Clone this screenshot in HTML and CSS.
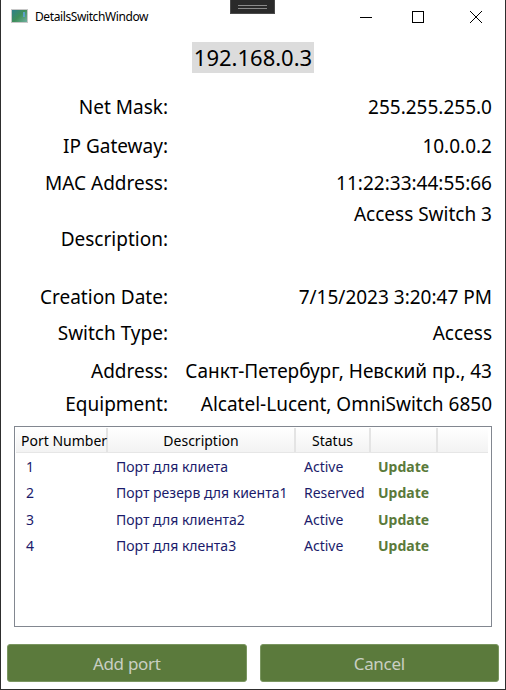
FILE: index.html
```html
<!DOCTYPE html>
<html>
<head>
<meta charset="utf-8">
<link rel="stylesheet" href="styles.css">
</head>
<body>
<div class="window">
  <div class="titlebar">
    <div class="app-icon"><span class="icon-bar"></span></div>
    <div class="title">DetailsSwitchWindow</div>
    <div class="grip"><span></span><span></span></div>
    <div class="controls">
      <div class="ctl"><svg width="14" height="14" viewBox="0 0 14 14"><line x1="1" y1="7.5" x2="13" y2="7.5" stroke="#000" stroke-width="1"/></svg></div>
      <div class="ctl"><svg width="14" height="14" viewBox="0 0 14 14"><rect x="1.5" y="1.5" width="11" height="11" fill="none" stroke="#000" stroke-width="1"/></svg></div>
      <div class="ctl"><svg width="14" height="14" viewBox="0 0 14 14"><path d="M1 1 L13 13 M13 1 L1 13" stroke="#000" stroke-width="1"/></svg></div>
    </div>
  </div>
  <div class="content">
    <div class="ip-wrap"><span class="ip">192.168.0.3</span></div>
    <div class="fields">
      <div class="row r1"><div class="label">Net Mask:</div><div class="value">255.255.255.0</div></div>
      <div class="row r2"><div class="label">IP Gateway:</div><div class="value">10.0.0.2</div></div>
      <div class="row r3"><div class="label">MAC Address:</div><div class="value">11:22:33:44:55:66</div></div>
      <div class="row r4 desc"><div class="label">Description:</div><div class="value">Access Switch 3</div></div>
      <div class="row r5"><div class="label">Creation Date:</div><div class="value">7/15/2023 3:20:47 PM</div></div>
      <div class="row r6"><div class="label">Switch Type:</div><div class="value">Access</div></div>
      <div class="row r7"><div class="label">Address:</div><div class="value">Санкт-Петербург, Невский пр., 43</div></div>
      <div class="row r8"><div class="label">Equipment:</div><div class="value">Alcatel-Lucent, OmniSwitch 6850</div></div>
    </div>
    <div class="list">
      <div class="lhead">
        <div class="hc c1 left">Port Number</div>
        <div class="hc c2">Description</div>
        <div class="hc c3">Status</div>
        <div class="hc c4"></div>
        <div class="hc c5"></div>
      </div>
      <div class="lrow"><div class="c1 num">1</div><div class="c2 d">Порт для клиета</div><div class="c3 s">Active</div><div class="c4 upd">Update</div></div>
      <div class="lrow"><div class="c1 num">2</div><div class="c2 d">Порт резерв для киента1</div><div class="c3 s">Reserved</div><div class="c4 upd">Update</div></div>
      <div class="lrow"><div class="c1 num">3</div><div class="c2 d">Порт для клиента2</div><div class="c3 s">Active</div><div class="c4 upd">Update</div></div>
      <div class="lrow"><div class="c1 num">4</div><div class="c2 d">Порт для клента3</div><div class="c3 s">Active</div><div class="c4 upd">Update</div></div>
    </div>
    <div class="buttons">
      <button class="btn">Add port</button>
      <button class="btn">Cancel</button>
    </div>
  </div>
</div>
</body>
</html>
```
FILE: styles.css
```css
* { box-sizing: border-box; }
html, body { margin: 0; padding: 0; }
body {
  width: 506px; height: 690px; overflow: hidden;
  font-family: "Noto Sans", "Open Sans", sans-serif;
  background: #fff;
}
.window {
  width: 506px; height: 690px;
  border-left: 1px solid #2e2e2e;
  border-right: 1px solid #2e2e2e;
  border-bottom: 1px solid #2e2e2e;
  display: flex; flex-direction: column;
  background: #fff;
}
.titlebar {
  height: 31px; display: flex; align-items: center; position: relative;
  padding-left: 10px;
}
.app-icon {
  width: 17px; height: 14px; margin-top: 1px;
  background: linear-gradient(135deg, #2f7f8a 0%, #3f8f5a 50%, #6fb0a0 100%);
  border: 1px solid #c8c8c8; position: relative;
}
.icon-bar { position: absolute; right: 2px; top: 2px; width: 2px; height: 5px; background: #5aa0c8; }
.title {
  margin-left: 7px; font-size: 12px; color: #000; margin-top: 1px;
  font-family: "Noto Sans", sans-serif; letter-spacing: -0.4px;
}
.grip {
  position: absolute; left: 229px; top: 0; width: 45px; height: 14px;
  background: #2a2a2a; border: 1px solid #4a4a4a; border-top: none;
  display: flex; flex-direction: column; align-items: center; justify-content: center; gap: 2px;
}
.grip span { width: 29px; height: 1px; background: #8a8a8a; }
.controls { margin-left: auto; display: flex; height: 31px; }
.ctl { width: 58px; display: flex; align-items: center; justify-content: center; padding-top: 2px; }
.ctl:first-child { width: 46px; }
.content { flex: 1; display: flex; flex-direction: column; }
.ip-wrap { display: flex; justify-content: center; padding-top: 11px; height: 57px; }
.ip {
  background: #dcdcdc; font-size: 22px; line-height: 31px; height: 31px;
  padding: 0 2px; color: #000;
}
.fields { display: flex; flex-direction: column; }
.row {
  display: grid; grid-template-columns: 167px 1fr; column-gap: 17px;
  align-items: center; font-size: 19px; color: #000; padding-right: 13px;
  line-height: 24px;
}
.label { text-align: right; white-space: nowrap; }
.value { text-align: right; white-space: nowrap; }
.r1 { height: 38px; }
.r2 { height: 40px; }
.r3 { height: 34px; }
.r4 { height: 78px; }
.desc .value { align-self: start; padding-top: 2px; }
.r5 { height: 38px; }
.r6 { height: 34px; }
.r7 { height: 42px; }
.r8 { height: 22px; }
.list {
  margin: 12px 13px 0 13px; height: 201px;
  border: 1px solid #828790; padding: 1px;
  font-size: 14px;
}
.lhead {
  display: flex; height: 25px; margin-right: 2px;
  background: linear-gradient(#ffffff, #f3f3f3);
  border-bottom: 1px solid #e6e6e6;
}
.hc {
  display: flex; align-items: center; justify-content: center;
  border-right: 2px solid #e4e4e4; color: #000; white-space: nowrap;
}
.hc.left { justify-content: flex-start; padding-left: 5px; }
.hc.c5 { flex: 1; border-right: none; }
.c1 { width: 92px; }
.c2 { width: 188px; }
.c3 { width: 75px; }
.c4 { width: 67px; }
.lrow { display: flex; align-items: center; height: 26.5px; color: #1b1b6b; }
.num { padding-left: 10px; }
.d { padding-left: 8px; white-space: nowrap; }
.s { padding-left: 8px; }
.upd { padding-left: 7px; font-weight: bold; color: #5a7a3a; }
.buttons {
  display: grid; grid-template-columns: 1fr 1fr; column-gap: 13px;
  padding: 17px 6px 0 6px;
}
.btn {
  height: 38px; background: #5b7a3c; border: 1px solid #7a9660; border-radius: 3px;
  color: #c9cfc3; font-size: 17px; font-family: "Noto Sans", sans-serif;
  letter-spacing: -0.3px; padding: 0;
}
```
